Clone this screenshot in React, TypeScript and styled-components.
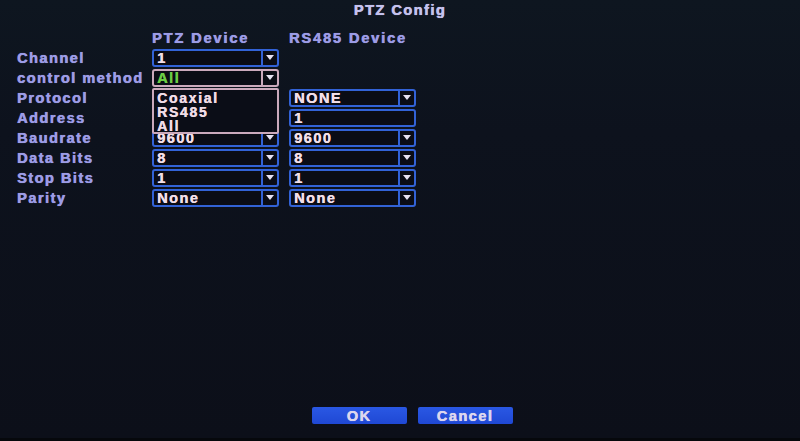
import React from 'react'
import styled, {createGlobalStyle} from 'styled-components'

const GlobalStyle = createGlobalStyle`
    html, body {
        margin: 0;
        padding: 0;
        background: #0c101a;
    }
    #root {
        width: 800px;
        height: 441px;
    }
`

type Cell = {value: string, kind: 'select' | 'input', open?: boolean}

type Field = {
    label: string
    ptz?: Cell
    rs?: Cell
}

// the PTZ protocol/address values sit under the open list, so they stay blank
const fields: Field[] = [
    {label: 'Channel', ptz: {value: '1', kind: 'select'}},
    {label: 'control method', ptz: {value: 'All', kind: 'select', open: true}},
    {label: 'Protocol', ptz: {value: '', kind: 'select'}, rs: {value: 'NONE', kind: 'select'}},
    {label: 'Address', ptz: {value: '', kind: 'input'}, rs: {value: '1', kind: 'input'}},
    {label: 'Baudrate', ptz: {value: '9600', kind: 'select'}, rs: {value: '9600', kind: 'select'}},
    {label: 'Data Bits', ptz: {value: '8', kind: 'select'}, rs: {value: '8', kind: 'select'}},
    {label: 'Stop Bits', ptz: {value: '1', kind: 'select'}, rs: {value: '1', kind: 'select'}},
    {label: 'Parity', ptz: {value: 'None', kind: 'select'}, rs: {value: 'None', kind: 'select'}},
]

const methods = ['Coaxial', 'RS485', 'All']

function Select ({value, kind, open}: Cell) {
    return (
        <Box $active={open}>
            <Value $active={open}>{value}</Value>
            {kind === 'select' && (
                <Arrow $active={open}>
                    <svg width="8" height="5" viewBox="0 0 8 5">
                        <path d="M0 0 H8 L4 5 Z" fill="#e6e2f2" />
                    </svg>
                </Arrow>
            )}
            {open && (
                <List>
                    {methods.map(m => <li key={m}>{m}</li>)}
                </List>
            )}
        </Box>
    )
}

export default function App () {
    return (
        <Screen>
            <GlobalStyle />
            <Title>PTZ Config</Title>
            <Form>
                <span />
                <ColHead>PTZ Device</ColHead>
                <ColHead>RS485 Device</ColHead>
                {fields.map(f => (
                    <React.Fragment key={f.label}>
                        <Label>{f.label}</Label>
                        {f.ptz ? <Select {...f.ptz} /> : <span />}
                        {f.rs ? <Select {...f.rs} /> : <span />}
                    </React.Fragment>
                ))}
            </Form>
            <Footer>
                <Button>OK</Button>
                <Button>Cancel</Button>
            </Footer>
        </Screen>
    )
}

const Screen = styled.div`
    width: 800px;
    height: 441px;
    display: flex;
    flex-direction: column;
    background: linear-gradient(180deg, #0e1620 0%, #0d121d 30%, #0c0f19 100%);
    border-bottom: 3px solid #06080c;
    box-sizing: border-box;
    font-family: "Liberation Sans", Arial, sans-serif;
    font-weight: bold;
    font-size: 14.5px;
    letter-spacing: 1.5px;
    overflow: hidden;
`

const Title = styled.div`
    height: 29px;
    line-height: 20px;
    text-align: center;
    color: #c4c2ee;
    text-shadow: 0.4px 0 0 #c4c2ee, 0 0 1px rgba(196, 194, 238, 0.6);
`

const Form = styled.div`
    display: grid;
    grid-template-columns: 125px 127px 127px;
    grid-auto-rows: 18px;
    column-gap: 10px;
    row-gap: 2px;
    padding-left: 17px;
`

const ColHead = styled.div`
    display: flex;
    align-items: center;
    color: #9c9ce6;
    letter-spacing: 1.9px;
    text-shadow: 0.4px 0 0 #9c9ce6, 0 0 1px rgba(156, 156, 230, 0.6);
`

const Label = styled(ColHead)`
    white-space: nowrap;
    letter-spacing: 1.5px;
`

const Box = styled.div<{$active?: boolean}>`
    position: relative;
    display: flex;
    align-items: stretch;
    box-sizing: border-box;
    height: 18px;
    border: 2px solid ${p => p.$active ? '#cba9bc' : '#3262d6'};
    border-radius: 3px;
    background: #0a0c15;
    z-index: ${p => p.$active ? 2 : 'auto'};
`

const Value = styled.div<{$active?: boolean}>`
    flex: 1;
    display: flex;
    align-items: center;
    padding-left: 3px;
    color: ${p => p.$active ? '#6ccc44' : '#f2dfe8'};
    text-shadow: 0.4px 0 0 ${p => p.$active ? '#6ccc44' : '#f2dfe8'};
    line-height: 1;
    overflow: hidden;
`

const Arrow = styled.div<{$active?: boolean}>`
    width: 14px;
    display: flex;
    align-items: center;
    justify-content: center;
    border-left: 2px solid ${p => p.$active ? '#cba9bc' : '#3262d6'};
    padding-bottom: 2px;
`

const List = styled.ul`
    position: absolute;
    left: -2px;
    right: -2px;
    top: 17px;
    height: 46px;
    margin: 0;
    padding: 1px 0 0 3px;
    list-style: none;
    box-sizing: border-box;
    border: 2px solid #cba9bc;
    border-radius: 2px;
    background: #0b0d17;
    color: #f0dce6;
    font-size: 14px;
    letter-spacing: 1.7px;
    text-shadow: 0.4px 0 0 #f0dce6;

    li {
        height: 14px;
        line-height: 14px;
    }
`

const Footer = styled.div`
    margin-top: auto;
    margin-bottom: 14px;
    display: flex;
    justify-content: center;
    gap: 11px;
    padding-left: 24px;
`

const Button = styled.div`
    width: 95px;
    height: 17px;
    display: flex;
    align-items: center;
    justify-content: center;
    background: linear-gradient(180deg, #2a58e4 0%, #1f48d4 100%);
    border-radius: 2px;
    color: #dcd6ee;
    font-size: 14.5px;
    text-shadow: 0.4px 0 0 #dcd6ee, 0 0 1px rgba(220, 214, 238, 0.6);
`
